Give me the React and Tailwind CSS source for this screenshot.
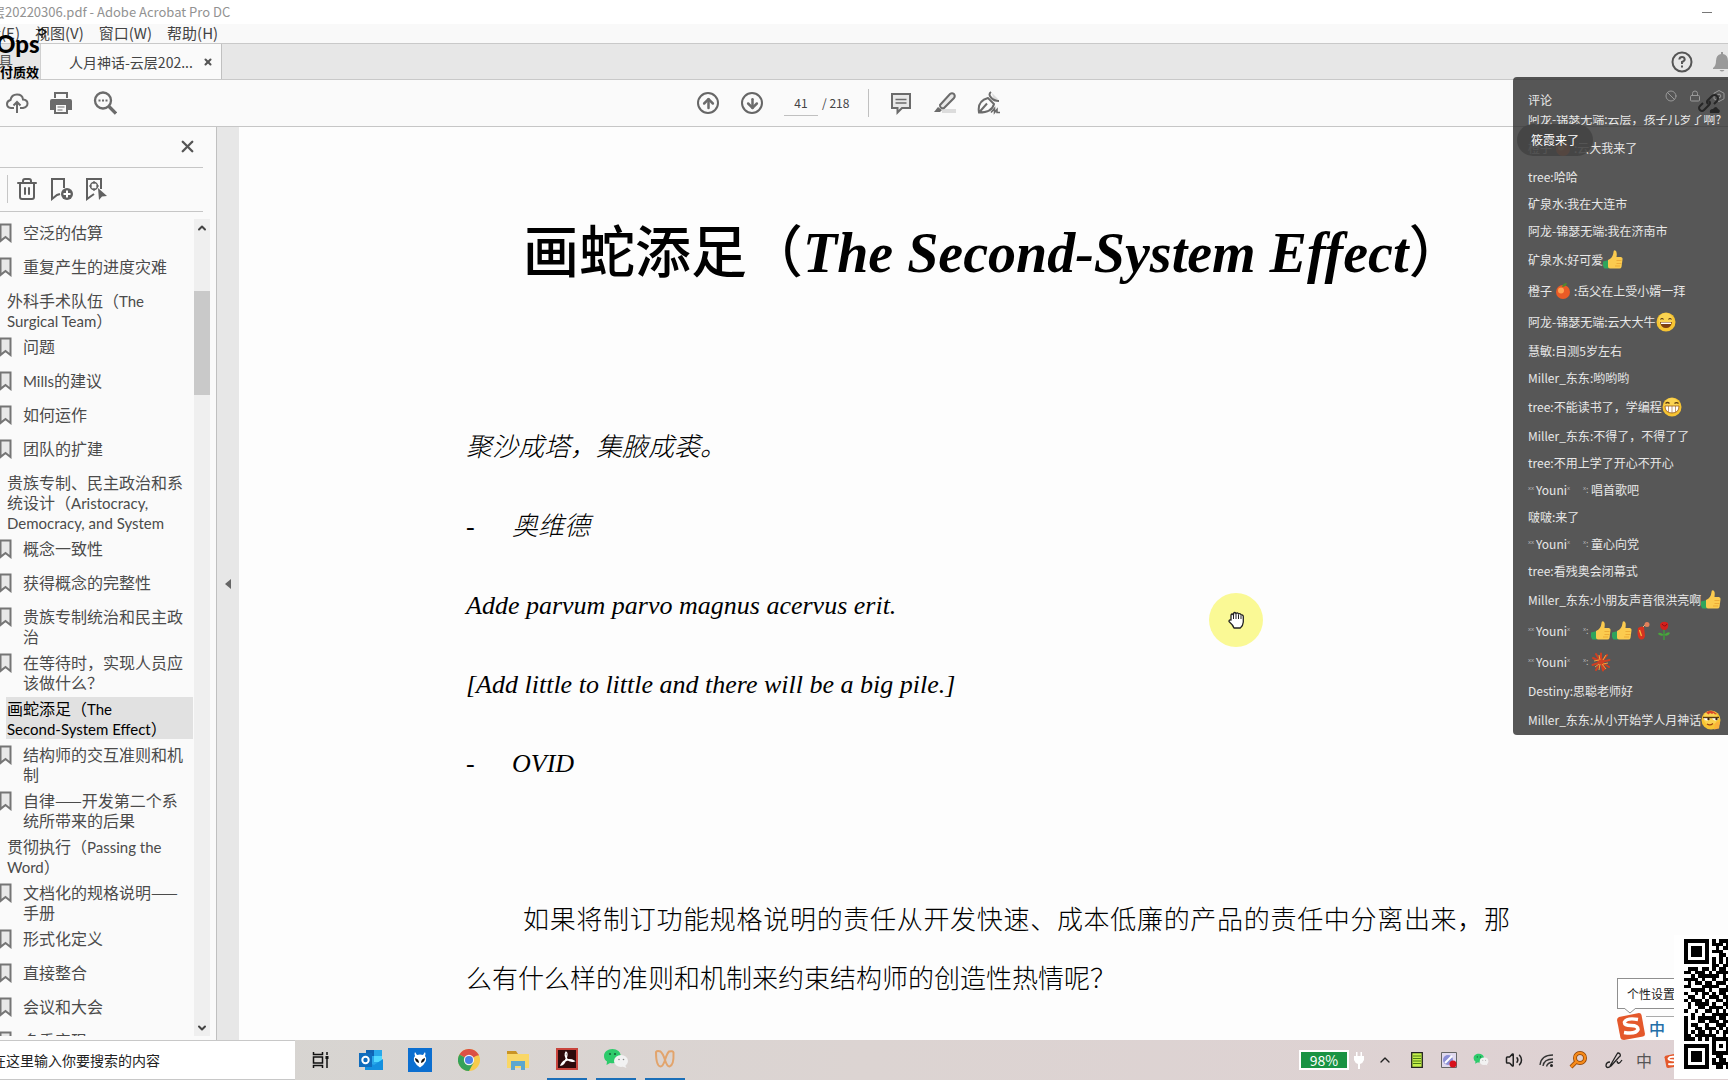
import { Trash2, X, ChevronUp, ChevronDown, ArrowUp, ArrowDown, Volume2, Lock, Ban } from 'lucide-react'

const bookmarks = [
  { level: 1, text: '空泛的估算' },
  { level: 1, text: '重复产生的进度灾难' },
  { level: 0, text: '外科手术队伍（The\nSurgical Team）' },
  { level: 1, text: '问题' },
  { level: 1, text: 'Mills的建议' },
  { level: 1, text: '如何运作' },
  { level: 1, text: '团队的扩建' },
  { level: 0, text: '贵族专制、民主政治和系\n统设计（Aristocracy,\nDemocracy, and System' },
  { level: 1, text: '概念一致性' },
  { level: 1, text: '获得概念的完整性' },
  { level: 1, text: '贵族专制统治和民主政\n治' },
  { level: 1, text: '在等待时，实现人员应\n该做什么？' },
  { level: 0, text: '画蛇添足（The\nSecond-System Effect）', active: true },
  { level: 1, text: '结构师的交互准则和机\n制' },
  { level: 1, text: '自律——开发第二个系\n统所带来的后果' },
  { level: 0, text: '贯彻执行（Passing the\nWord）' },
  { level: 1, text: '文档化的规格说明——\n手册' },
  { level: 1, text: '形式化定义' },
  { level: 1, text: '直接整合' },
  { level: 1, text: '会议和大会' },
  { level: 1, text: '多重实现' },
]

const comments = [
  { user: '阿龙-锦瑟无端', text: '云层，孩子几岁了啊?' },
  { user: '橙子', fruit: true, text: '云大我来了' },
  { user: 'tree', text: '哈哈' },
  { user: '矿泉水', text: '我在大连市' },
  { user: '阿龙-锦瑟无端', text: '我在济南市' },
  { user: '矿泉水', text: '好可爱', emoji: ['thumb'] },
  { user: '橙子', fruit: true, text: '岳父在上受小婿一拜' },
  { user: '阿龙-锦瑟无端', text: '云大大牛', emoji: ['smile'] },
  { user: '慧敏', text: '目测5岁左右' },
  { user: 'Miller_东东', text: '哟哟哟' },
  { user: 'tree', text: '不能读书了，学编程', emoji: ['grin'] },
  { user: 'Miller_东东', text: '不得了，不得了了' },
  { user: 'tree', text: '不用上学了开心不开心' },
  { youni: true, text: '唱首歌吧' },
  { user: '啵啵', text: '来了' },
  { youni: true, text: '童心向党' },
  { user: 'tree', text: '看残奥会闭幕式' },
  { user: 'Miller_东东', text: '小朋友声音很洪亮啊', emoji: ['thumb'] },
  { youni: true, text: '', emoji: ['thumb', 'thumb', 'cracker', 'rose'] },
  { youni: true, text: '', emoji: ['firework'] },
  { user: 'Destiny', text: '思聪老师好' },
  { user: 'Miller_东东', text: '从小开始学人月神话', emoji: ['cool'] },
]

const qrRows = [
  '1111111010111', '1000001011101', '1011101001011', '1011101011100', '1011101000110',
  '1000001010101', '1111111010101', '0000000011011', '0111011010110', '1101110101111',
  '0010111111010', '1111010010011', '0101101101110', '1100011111001', '0011110100111',
  '1001011010110', '0110010111011', '1011101001101', '0101111010011', '0100110111101',
  '1001001101010', '0010010011111', '1010111110110', '1000110111011', '1011001001110',
  '1001101110101', '1010110101011', '1101111110010', '1110101011111', '0000000010001',
  '1111111010101', '1000001010001', '1011101011111', '1011101001100', '1011101010110',
  '1000001011111', '1111111001101',
]

function Emoji({ name }) {
  const face = (
    <>
      <circle cx="10" cy="10" r="9.5" fill="#f7c432" />
      <circle cx="9.5" cy="8" r="7" fill="#fde06b" opacity=".55" />
    </>
  )
  return (
    <svg viewBox="0 0 20 20" className="mr-px h-5 w-5 shrink-0">
      {name === 'thumb' && (
        <>
          <path d="M0 11.500l6-1.500v8.500H1.500q-2.500-3-1.500-7z" fill="#2fa45c" />
          <path d="M5 10q5-2 5.500-8 0-2 1.500-1.800Q14.500 1 13.500 7H18q2 .5 1.500 2.500L18.500 17q-.5 1.500-2 1.500H7q-2 0-2-2z" fill="#fbcb4f" />
          <path d="M13.500 10.500h5M13.500 13.500h5M12 16h5" stroke="#e79f2c" strokeWidth=".7" />
        </>
      )}
      {name === 'smile' && (
        <>
          {face}
          <path d="M4.500 7.500q1.500-2 3 0M12.500 7.500q1.500-2 3 0" fill="none" stroke="#5b3a10" strokeWidth="1.200" />
          <path d="M4 10h12q-1 6-6 6t-6-6z" fill="#7c3f12" />
          <path d="M5 10.500h10v1.500H5z" fill="#fff" />
        </>
      )}
      {name === 'grin' && (
        <>
          {face}
          <path d="M3.500 6.500q2-2 4 0M12.500 6.500q2-2 4 0" fill="none" stroke="#5b3a10" strokeWidth="1.200" />
          <path d="M3 9h14q0 7-7 7T3 9z" fill="#fff" stroke="#9a5b15" strokeWidth=".8" />
          <path d="M6.500 9v6M10 9v7M13.500 9v6" stroke="#9a5b15" strokeWidth=".6" />
        </>
      )}
      {name === 'cool' && (
        <>
          {face}
          <path d="M5 2.500q5-4 11 1.500l-2 .5-1.500-1.500-1.500 1-2-1-1.500 1.500z" fill="#d9482b" />
          <path d="M2.500 7.500h6.500v1.500q-3 3-6 0zM11 7.500h6.500V9q-3 3-6 0z" fill="#fff" />
          <path d="M2 7.500h16" stroke="#5b3a10" strokeWidth="1.400" />
          <circle cx="7.500" cy="9" r="1.200" fill="#3b2408" />
          <circle cx="15.500" cy="9" r="1.200" fill="#3b2408" />
          <path d="M6 14q3 2 6-.5" fill="none" stroke="#a0430f" strokeWidth="1.200" />
          <path d="M14 13.500q3-2.500 5-1.500l-1 6.500-5 1z" fill="#fbb23a" />
        </>
      )}
      {name === 'cracker' && (
        <>
          <path d="M5 7q3-2.500 6-1l1 9q-1 4-4 3.500Q5 18 4.500 12z" fill="#d8321f" />
          <path d="M6.500 9l2 6" stroke="#f6b73c" strokeWidth="1.300" />
          <path d="M10 6l3-3" stroke="#eac27a" />
          <circle cx="14" cy="3.500" r="2.500" fill="#e2805a" />
        </>
      )}
      {name === 'rose' && (
        <>
          <path d="M10 8v11" stroke="#3c9a3b" strokeWidth="1.500" />
          <path d="M10 14q-5-4-6-1 3 3 6 1zM10 14q4-4 6-2-2 4-6 2z" fill="#49a63c" />
          <path d="M6 3q3-4 8-1 1 6-3 7-5 0-5-6z" fill="#d3201d" />
          <path d="M8 3q3 4 5 0" fill="none" stroke="#8f0d12" />
        </>
      )}
      {name === 'firework' && (
        <>
          <path
            d="M10 10V1.500M10 10l6-7M10 10l8.500-2M10 10l8 5M10 10l2 8.500M10 10l-5 8M10 10l-8.500 3M10 10L2 6M10 10L5 2M10 10l3.500 7"
            stroke="#cf3f22"
            strokeWidth="2"
            strokeLinecap="round"
          />
          <path d="M8 8L3 9M12 8l3-5M12 12l5-1M8 12l-4 3M9 8L8 3M11 12l4 5M9 12l-1 6" stroke="#f0a03a" strokeWidth="1" />
        </>
      )}
    </svg>
  )
}

function Fruit() {
  return (
    <svg viewBox="0 0 16 16" className="mx-[3px] h-4 w-4 shrink-0">
      <circle cx="8" cy="9" r="7" fill="#ea5b26" />
      <circle cx="6" cy="7.500" r="3" fill="#ffa251" />
      <path d="M7 4q1-4 5-4-1 4-5 4z" fill="#4d8b2c" />
    </svg>
  )
}

function WeChat({ className }) {
  return (
    <svg viewBox="0 0 26 22" className={className}>
      <path d="M9.500 1C4.500 1 1 4 1 8q0 3.500 3 5.500L3.500 17 7 15q7 1 10-3 2-6-1.500-9-2.500-2-6-2z" fill="#2dcb6b" />
      <ellipse cx="18" cy="13" rx="7" ry="6" fill="#f2f2f2" />
      <path d="M22 17l1.500 3-4-1.500z" fill="#f2f2f2" />
      <circle cx="7" cy="6" r="1.100" fill="#17643a" />
      <circle cx="12" cy="6" r="1.100" fill="#17643a" />
      <circle cx="16" cy="11.500" r=".8" fill="#888" />
      <circle cx="20.500" cy="11.500" r=".8" fill="#888" />
    </svg>
  )
}

function Sogou({ className }) {
  return (
    <svg viewBox="0 0 30 28" className={className}>
      <path d="M3 5L23 1q2 0 2.500 2L29 22q0 2-2 2.500L8 28q-3 0-3.500-2L1 8q0-2 2-3z" fill="#e4582b" />
      <path d="M22 7.500q-11-2-13.500 2.500-.5 3.500 6.500 3.500t7 4q-2 5-14 3" fill="none" stroke="#fff" strokeWidth="3.500" />
    </svg>
  )
}

function TopBars() {
  return (
    <header className="shrink-0">
      <div className="flex h-6 items-center justify-between overflow-hidden bg-white pr-4 text-[13px] text-[#929292]">
        <span className="-ml-2 whitespace-nowrap">层20220306.pdf - Adobe Acrobat Pro DC</span>
        <button aria-label="最小化" className="h-4 w-[10px]">
          <span className="block h-px bg-[#777]" />
        </button>
      </div>
      <nav className="flex h-[19px] items-center gap-[15px] overflow-hidden bg-[#f9f9f9] pb-px text-[15px] leading-[18px] text-[#444]">
        <button className="-ml-[14px] whitespace-nowrap">辑(E)</button>
        <button>视图(V)</button>
        <button>窗口(W)</button>
        <button>帮助(H)</button>
      </nav>
      <div className="flex h-[37px] border-y border-[#c9c9c9] bg-[#e7e7e7]">
        <button className="-ml-[2px] flex w-[43px] shrink-0 items-center overflow-hidden border-r border-[#d0d0d0] text-[15px] text-[#555]">具</button>
        <div className="flex w-[181px] items-center border-r border-[#c0c0c0] bg-[#fafafa] pl-7 text-sm text-[#444]">
          <span className="whitespace-nowrap">人月神话-云层202...</span>
          <button aria-label="关闭标签" className="ml-[10px]">
            <X className="h-[10px] w-[10px] text-[#555]" strokeWidth={5} />
          </button>
        </div>
        <div className="ml-auto -mr-1 flex items-center gap-[19px]">
          <button aria-label="帮助">
            <svg viewBox="0 0 22 22" className="h-[22px] w-[22px]" fill="none" stroke="#555" strokeWidth="2">
              <circle cx="11" cy="11" r="9.500" />
              <path d="M8.300 8.500q.3-2.500 2.700-2.500t2.700 2.300Q13.700 10 11 11v2M11 14.500v2" />
            </svg>
          </button>
          <button aria-label="通知">
            <svg viewBox="0 0 20 20" className="h-5 w-5" fill="#999">
              <path d="M9 0h2v2q5 1 5 7 0 5 3 7v1H1v-1q3-2 3-7 0-6 5-7zM7.500 18h5q-2.500 3-5 0z" />
            </svg>
          </button>
        </div>
      </div>
      <div className="grid h-[47px] grid-cols-[1fr_auto_1fr] items-center border-b border-[#c6c6c6] bg-[#fafafa] pr-[30px] text-[#6b6b6b]">
        <div className="flex items-center gap-5 pl-[5px]">
          <button aria-label="上传">
            <svg viewBox="0 0 24 24" className="h-6 w-6" fill="none" stroke="currentColor" strokeWidth="2">
              <path d="M9 17H6q-4-.5-4-4 0-3 3.500-4Q6.500 3.500 12 3.500T18 8.500q4.500.5 4.500 4T18 17h-3M12 22V11M8.500 14.500L12 11l3.500 3.500" />
            </svg>
          </button>
          <button aria-label="打印">
            <svg viewBox="0 0 24 24" className="h-6 w-6" fill="currentColor">
              <path d="M5 1h14v6H5zM3 8h18q2 0 2 2v9h-4v-5H5v5H1v-9q0-2 2-2z" />
              <path d="M7 3h10v5H7z" fill="#fafafa" />
              <path d="M6 13h12v9H6z" fill="#fafafa" stroke="currentColor" strokeWidth="2" />
              <path d="M8.500 16h7M8.500 19h5" stroke="currentColor" strokeWidth="1.200" />
            </svg>
          </button>
          <button aria-label="查找">
            <svg viewBox="0 0 24 24" className="h-6 w-6" fill="none" stroke="currentColor" strokeWidth="2.300">
              <circle cx="10" cy="9.500" r="8" />
              <path d="M16 15.500l7 7" strokeWidth="3.300" />
              <path d="M5.500 9.500h2M9 9.500h2M12.500 9.500h2" strokeWidth="2" />
            </svg>
          </button>
        </div>
        <div className="flex items-center">
          <button aria-label="上一页" className="flex h-[22px] w-[22px] items-center justify-center rounded-full border-2 border-[#666]">
            <ArrowUp className="h-[15px] w-[15px]" strokeWidth={4} />
          </button>
          <button aria-label="下一页" className="ml-[22px] flex h-[22px] w-[22px] items-center justify-center rounded-full border-2 border-[#666]">
            <ArrowDown className="h-[15px] w-[15px]" strokeWidth={4} />
          </button>
          <input
            aria-label="页码"
            defaultValue="41"
            className="ml-[21px] h-[26px] w-[34px] border-b border-[#c0c0c0] bg-transparent text-center text-xs text-[#444] outline-none"
          />
          <span className="ml-1 w-[46px] text-xs text-[#444]">/ 218</span>
          <span className="mr-5 h-7 w-px bg-[#c0c0c0]" />
          <button aria-label="添加附注">
            <svg viewBox="0 0 24 24" className="h-6 w-6" fill="#e8e8e8" stroke="currentColor" strokeWidth="2">
              <path d="M3 3h18v14h-8l-4.500 4.500V17H3z" />
              <path d="M6.500 8.500h11M6.500 12h11" strokeWidth="1.300" />
            </svg>
          </button>
          <button aria-label="高亮文本" className="ml-5">
            <svg viewBox="0 0 24 24" className="h-6 w-6" fill="#e8e8e8" stroke="currentColor" strokeWidth="2">
              <path d="M9 18h14v4H9z" fill="#dcdcdc" stroke="none" />
              <path d="M7 14L17 3q2-1.500 4 0 1.500 2 0 4L11 17q-4 1-4-3z" />
              <path d="M5 16l4 3-2 2H1z" fill="currentColor" stroke="none" />
            </svg>
          </button>
          <button aria-label="签名" className="ml-5">
            <svg viewBox="0 0 24 24" className="h-6 w-6" fill="none" stroke="currentColor" strokeWidth="2">
              <path d="M15 2l6 6-4 3z" fill="#dcdcdc" stroke="none" />
              <path d="M2 21.500Q0 10 11 7l6 6q-2 8.500-15 8.500zM2 21.500l8-9M14 1q-3 2 0 5.500T22 10" />
              <path d="M14 21.500l3.500-4v4l2.500-3v3h3" strokeWidth="1.600" />
            </svg>
          </button>
        </div>
        <span />
      </div>
    </header>
  )
}

// latin runs use a narrower face than the chinese around them
function MixedText({ text }) {
  return text.split(/([A-Za-z][A-Za-z ,-]*)/).map((part, i) =>
    i % 2 ? (
      <span key={i} className="font-['Lato',sans-serif] text-[15px] leading-none">{part}</span>
    ) : (
      part
    )
  )
}

function Sidebar() {
  return (
    <aside className="flex w-[217px] shrink-0 flex-col border-r border-[#c0c0c0] bg-[#fafafa] pb-1">
      <div className="mr-[13px] flex h-[41px] shrink-0 items-center justify-end border-b border-[#c6c6c6] pr-[6px] pb-[2px]">
        <button aria-label="关闭面板">
          <X className="h-[19px] w-[19px] text-[#555]" strokeWidth={3} />
        </button>
      </div>
      <div className="mr-[13px] flex h-11 shrink-0 items-center border-b border-[#c6c6c6] pb-px pl-[7px] text-[#606060]">
        <span className="h-7 w-px bg-[#c6c6c6]" />
        <button aria-label="删除书签" className="ml-[7px]">
          <Trash2 className="h-6 w-6" strokeWidth={2} />
        </button>
        <button aria-label="新建书签" className="ml-[11px]">
          <svg viewBox="0 0 24 24" className="h-6 w-6" fill="none" stroke="currentColor" strokeWidth="2">
            <path d="M10 17l-3 1-5 4V2h12v9" />
            <circle cx="17" cy="17" r="6" fill="currentColor" stroke="none" />
            <path d="M17 13.500v7M13.500 17h7" stroke="#fff" />
          </svg>
        </button>
        <button aria-label="查找书签" className="ml-[11px]">
          <svg viewBox="0 0 24 24" className="h-6 w-6" fill="none" stroke="currentColor" strokeWidth="2">
            <path d="M9 17l-7 5V2h14v10" />
            <circle cx="9" cy="9" r="3.500" strokeWidth="1.500" />
            <path d="M9 4v3M9 11v3M4 9h3M11 9h3" strokeWidth="1.200" />
            <path d="M13 11l9 8-5 .5-3 3.500z" fill="currentColor" stroke="none" />
          </svg>
        </button>
      </div>
      <div className="mt-[7px] flex min-h-0 flex-1">
        <ul className="min-w-0 flex-1 overflow-hidden text-base leading-5 text-[#4b4b4b]">
          {bookmarks.map((b) => (
            <li key={b.text} className="flex min-h-[34px] items-start pt-[2px] pb-[2px]">
              {b.level === 1 && (
                <svg viewBox="0 0 13 20" className="mt-[2px] -ml-px mr-[5px] h-5 w-[13px] shrink-0">
                  <path d="M1.500 1.500h10v16.500l-5-4-5 4z" fill="#e8e8e8" stroke="#757575" strokeWidth="2" />
                </svg>
              )}
              <button
                className={
                  b.active
                    ? 'ml-[6px] mr-px flex-1 bg-[#e1e1e1] py-px pl-px text-left whitespace-pre text-black'
                    : b.level === 1
                      ? 'ml-[6px] flex-1 py-px text-left whitespace-pre'
                      : 'ml-[7px] flex-1 py-px text-left whitespace-pre'
                }
              >
                <MixedText text={b.text} />
              </button>
            </li>
          ))}
        </ul>
        <div className="mr-[6px] flex w-4 shrink-0 flex-col items-center bg-[#efefef] text-[#444]">
          <ChevronUp className="mt-px h-4 w-3" strokeWidth={4} />
          <div className="mt-[55px] h-[104px] w-full bg-[#c9c9c9]" />
          <ChevronDown className="mt-auto h-4 w-3" strokeWidth={4} />
        </div>
      </div>
    </aside>
  )
}

function Page() {
  return (
    <main className="min-w-0 flex-1 overflow-hidden bg-[#fdfdfd] pt-[86px] pl-[227px] font-['Liberation_Serif','Noto_Sans_CJK_SC',serif] text-black">
      <h1 className="ml-[57px] text-[56px] leading-[80px] font-medium whitespace-nowrap">
        画蛇添足（<em className="font-bold">The Second-System Effect</em>）
      </h1>
      <div className="mt-[115px] text-[26px] leading-[79px] whitespace-nowrap italic">
        <p className="font-light">聚沙成塔，集腋成裘。</p>
        <p className="flex font-light"><span className="w-[46px] not-italic">-</span>奥维德</p>
        <p>Adde parvum parvo magnus acervus erit.</p>
        <p>[Add little to little and there will be a big pile.]</p>
        <p className="flex"><span className="w-[46px] not-italic">-</span>OVID</p>
      </div>
      <p className="mt-[88px] max-w-[1044px] indent-[57px] text-[26px] leading-[59px] font-light text-justify">
        如果将制订功能规格说明的责任从开发快速、成本低廉的产品的责任中分离出来，那么有什么样的准则和机制来约束结构师的创造性热情呢？
      </p>
    </main>
  )
}

function YouniName() {
  return (
    <span className="flex items-center">
      <span className="w-2 text-[9px] text-[#bbb]">ˣˣ</span>
      <span>Youni</span>
      <span className="w-4 text-[9px] text-[#bbb]">ˣ</span>
      <span className="w-2 text-[9px] text-[#bbb]">ˣ:</span>
    </span>
  )
}

function ChatPanel() {
  return (
    <section className="absolute top-[77px] right-0 w-[215px] overflow-hidden rounded-l bg-[#2d2d2d]/80 text-xs text-[#e8e8e8]">
      <div className="flex h-[38px] items-center pt-2 pl-[15px]">
        <h2>评论</h2>
        <div className="ml-auto flex items-center gap-3 pr-[3px] pb-2 text-[#999]">
          <Ban className="h-3 w-3" />
          <Lock className="h-3 w-3" />
          <svg viewBox="0 0 12 12" className="h-3 w-3" fill="none" stroke="currentColor">
            <path d="M6 .5l5 2.700v5.600l-5 2.700-5-2.700V3.200z" />
            <circle cx="6" cy="6" r="1.800" />
          </svg>
        </div>
      </div>
      <div className="overflow-hidden">
        <ul className="-mt-[10px]">
          {comments.map((c, i) => (
            <li
              key={i}
              className={c.emoji || c.fruit ? 'flex h-[31px] items-center pl-[15px] whitespace-pre' : 'flex h-[27px] items-center pl-[15px] whitespace-pre'}
            >
              {c.youni ? <YouniName /> : <span>{c.user}{!c.fruit && ':'}</span>}
              {c.fruit && <><Fruit /><span>:</span></>}
              <span>{c.text}</span>
              {c.emoji && c.emoji.map((e, n) => <Emoji key={n} name={e} />)}
            </li>
          ))}
        </ul>
      </div>
      <div className="absolute top-[47px] left-1 flex h-8 w-[76px] items-center rounded-full bg-[#444]/90 pl-[14px] text-white">
        筱霞来了
      </div>
      <svg viewBox="0 0 24 22" className="absolute top-[15px] right-[7px] h-[22px] w-6" fill="none" stroke="#262626" strokeWidth="2">
        <path d="M11 12q-2-2 0-4l4-4q3-2 5 0t0 5l-3 3M12 9q2 2 0 4l-5 5q-2 2-4 0t0-4l3-3" />
        <path d="M13 21q-1-4 3-4 3-4 5 0 3 1 1 4z" fill="#262626" stroke="none" />
      </svg>
    </section>
  )
}

function Taskbar() {
  return (
    <footer className="flex h-10 shrink-0 bg-linear-to-r from-[#d5d5d1] via-[#dcd4d2] to-[#dfd1d3]">
      <label className="w-[295px] shrink-0 overflow-hidden border-y border-[#c8c8c8] bg-white">
        <input
          aria-label="搜索"
          placeholder="在这里输入你要搜索的内容"
          className="-ml-2 h-full w-full text-sm outline-none placeholder:text-[#222]"
        />
      </label>
      <div className="flex">
        <button aria-label="任务视图" className="flex w-[51px] items-center justify-center">
          <svg viewBox="0 0 18 18" className="h-[18px] w-[18px]" fill="none" stroke="#111" strokeWidth="1.500">
            <path d="M1.500 1v2.500h9V1M1.500 17v-2.500h9V17M1.500 6h9v6h-9zM15 1v3M15 8v9" />
            <path d="M13.500 5h3v3h-3z" fill="#111" stroke="none" />
          </svg>
        </button>
        <button aria-label="Outlook" className="flex w-[49px] items-center justify-center">
          <svg viewBox="0 0 24 22" className="h-[22px] w-6">
            <path d="M7 1h16v18H7z" fill="#28a8ea" />
            <path d="M7 1h8v6H7z" fill="#0f64b4" />
            <path d="M15 7h8v6h-8z" fill="#50d9ff" />
            <path d="M6 21V12l9 4 9-6v11z" fill="#1490df" />
            <path d="M0 4h13v14H0z" fill="#0f6cbd" />
            <circle cx="6.500" cy="11" r="3.200" fill="none" stroke="#fff" strokeWidth="2" />
          </svg>
        </button>
        <button aria-label="foobar2000" className="flex w-[49px] items-center justify-center">
          <svg viewBox="0 0 24 24" className="h-6 w-6">
            <path d="M0 0h24v24H0z" fill="#0c6fd0" />
            <path d="M7 4l2 3q3-1 6 0l2-3q1 2 0 4 2 2 1 5-2 4-6 6.500Q8 17 6 13q-1-3 1-5-1-2 0-4z" fill="#fff" />
            <path d="M7 10q4 1 4 5-4-1-4-5zM17 10q-4 1-4 5 4-1 4-5z" fill="#111" />
          </svg>
        </button>
        <button aria-label="Chrome" className="flex w-[49px] items-center justify-center">
          <svg viewBox="0 0 24 24" className="h-[22px] w-[22px]">
            <circle cx="12" cy="12" r="12" fill="#f7cb4c" />
            <path d="M12 12L1.600 6A12 12 0 0 1 22.400 6z" fill="#dc5145" />
            <path d="M12 12L1.600 6A12 12 0 0 0 12 24l5-9z" fill="#34a25a" />
            <path d="M12 6.500h10.700" stroke="#dc5145" strokeWidth="1" />
            <circle cx="12" cy="12" r="5.600" fill="#f4f4f4" />
            <circle cx="12" cy="12" r="4.400" fill="#4a80e8" />
          </svg>
        </button>
        <button aria-label="文件资源管理器" className="flex w-[49px] items-center justify-center">
          <svg viewBox="0 0 24 22" className="h-[22px] w-6">
            <path d="M1 2h9l2 3H1z" fill="#c99424" />
            <path d="M1 5h22v14H1z" fill="#f9d767" />
            <path d="M5 21v-9h14v9h-4v-4H9v4z" fill="#5ca7cf" />
          </svg>
        </button>
        <button aria-label="Acrobat" className="flex w-[49px] flex-col items-center pt-2">
          <svg viewBox="0 0 22 22" className="h-[22px] w-[22px]">
            <path d="M1 1h20v20H1z" fill="#2d0a0b" stroke="#c8443c" strokeWidth="2" />
            <path d="M5 17q2-4 6-5 4-1 7 1-4 1-7-2-3-4-1-7 2 1 0 7-2 6-5 6z" fill="none" stroke="#fff" strokeWidth="1.300" />
          </svg>
          <span className="mt-auto h-[2px] w-10 bg-[#1b6fb8]" />
        </button>
        <button aria-label="微信" className="flex w-[49px] flex-col items-center pt-2">
          <WeChat className="h-[22px] w-[26px]" />
          <span className="mt-auto h-[2px] w-10 bg-[#1b6fb8]" />
        </button>
        <button aria-label="文稿" className="flex w-[49px] flex-col items-center pt-2">
          <svg viewBox="0 0 22 22" className="h-[22px] w-[22px]" fill="none" stroke="#e2a46c" strokeWidth="2">
            <path d="M2 4q0 14 4.500 14.500Q9 18.500 11 12t4-8.500q4-1 4.500 1 .5 13-4 14-2.500 0-4.500-6.500T6.500 3.500Q3 2.500 2 4z" />
          </svg>
          <span className="mt-auto h-[2px] w-10 bg-[#1b6fb8]" />
        </button>
      </div>
      <div className="mr-[54px] ml-auto flex items-center overflow-hidden text-[#222]">
        <div className="flex h-5 w-[50px] items-center justify-center border-2 border-white bg-[#199343] text-sm text-white">98%</div>
        <svg viewBox="0 0 12 20" className="ml-1 h-5 w-3" fill="#fff">
          <path d="M3 2h1.500v4h3V2H9v4h2v4q-1 3-4 4v5H5v-5q-3-1-4-4V6h2z" />
        </svg>
        <ChevronUp className="ml-3 h-4 w-4" strokeWidth={2} />
        <svg viewBox="0 0 12 16" className="ml-[18px] h-4 w-3">
          <path d="M.7.7h10.600v14.600H.7z" fill="#c5f04a" stroke="#222" strokeWidth="1.300" />
          <path d="M2 4h8M2 6.500h8M2 9h8M2 11.500h8" stroke="#4a7d14" />
        </svg>
        <svg viewBox="0 0 16 16" className="ml-[18px] h-4 w-4">
          <path d="M.5.5h15v15H.5z" fill="#e0d9ee" stroke="#666" />
          <circle cx="7" cy="8" r="5" fill="#8b8ed6" />
          <path d="M4 11l7-7" stroke="#fff" strokeWidth="2" />
          <circle cx="12" cy="12" r="3.500" fill="#d8111c" />
        </svg>
        <WeChat className="ml-4 h-[14px] w-4" />
        <Volume2 className="ml-4 h-[18px] w-[18px]" strokeWidth={2} />
        <svg viewBox="0 0 16 16" className="ml-4 h-4 w-4" fill="none" stroke="#333" strokeWidth="1.300">
          <path d="M1 13Q2 3 14 3M4 14q1-7 10-7M7.500 14.500q1-4 6.500-4.500" />
          <circle cx="12.500" cy="13.500" r="1.500" fill="#222" stroke="none" />
        </svg>
        <svg viewBox="0 0 18 18" className="ml-[14px] h-[18px] w-[18px]" fill="none">
          <path d="M8 10l-6 6" stroke="#8b4207" strokeWidth="4" />
          <circle cx="11" cy="7" r="5" stroke="#8b4207" strokeWidth="4" />
          <path d="M8 10l-6 6" stroke="#f68a1a" strokeWidth="2.500" />
          <circle cx="11" cy="7" r="5" stroke="#f68a1a" strokeWidth="2.500" />
        </svg>
        <svg viewBox="0 0 18 18" className="ml-[18px] h-[18px] w-[18px]" fill="none" stroke="#222" strokeWidth="1.300">
          <path d="M5 15L12 3q1-2 3 0 1 2-1 3L6 15q-4 3-5 0 0-4 4-4M12 10q1 5 5-1" />
        </svg>
        <span className="ml-[13px] text-base text-[#555]">中</span>
        <span className="ml-3 w-[10px] overflow-hidden"><Sogou className="h-[15px] w-4" /></span>
      </div>
    </footer>
  )
}

export default function App() {
  return (
    <div className="relative flex h-screen flex-col overflow-hidden bg-white font-['Noto_Sans_CJK_SC','Noto_Sans',sans-serif]">
      <TopBars />
      <div className="flex min-h-0 flex-1">
        <Sidebar />
        <button aria-label="折叠面板" className="flex w-[22px] shrink-0 items-center justify-center bg-[#e7e7e7]">
          <svg viewBox="0 0 6 10" className="h-[10px] w-[6px]"><path d="M6 0v10L0 5z" fill="#666" /></svg>
        </button>
        <Page />
      </div>
      <Taskbar />

      {/* watermark logo */}
      <div className="pointer-events-none absolute top-[31px] left-0 w-[46px] overflow-hidden font-bold text-black">
        <div className="-ml-1 font-['Lato','Noto_Sans_CJK_SC',sans-serif] text-[24px] leading-[26px] font-black">Ops</div>
        <div className="mt-[7px] text-[13px] leading-4 whitespace-nowrap">付质效</div>
      </div>
      <svg viewBox="0 0 10 12" className="pointer-events-none absolute top-[27px] left-[37px] h-3 w-[10px]" fill="none" stroke="#111" strokeWidth="1.500">
        <path d="M1 4l4-2 4 3-4 3-3-1M5 8v3" />
      </svg>

      {/* cursor spotlight */}
      <div className="pointer-events-none absolute top-[593px] left-[1209px] flex h-[54px] w-[54px] items-center justify-center rounded-full bg-[#faf995]">
        <svg viewBox="0 0 18 18" className="h-[18px] w-[18px]" fill="#fff" stroke="#222" strokeWidth="1.300" strokeLinejoin="round">
          <path d="M4 9V4q1-2 2.500 0V2.500q1-2 2.500 0Q10.500 1 11.500 3q2-1 2.500 1 2-.5 2.300 1.500V11q-.3 4-3 6H7q-1-3-5-6.500Q2 8.500 4 9z" />
          <path d="M6.500 4v4M9 3v5M11.500 3.500V8M14 5v3" strokeWidth="1" />
        </svg>
      </div>

      <ChatPanel />

      {/* input method bar */}
      <div className="absolute right-[54px] bottom-10 w-[58px] overflow-hidden">
        <div className="ml-px h-[31px] border border-r-0 border-[#8f8f8f] bg-white pl-[9px] text-xs leading-[29px] whitespace-nowrap text-[#222]">
          个性设置
        </div>
        <div className="flex h-[31px] items-end">
          <Sogou className="h-7 w-[30px] shrink-0" />
          <span className="h-6 flex-1 border-t border-[#aaa] bg-white pl-[3px] text-base leading-[22px] font-medium text-[#236fa8]">中</span>
        </div>
        <svg viewBox="0 0 12 6" className="absolute top-[30px] left-2 h-[6px] w-3">
          <path d="M0 0l6 5 6-5" fill="#fff" stroke="#8f8f8f" />
        </svg>
      </div>

      <div className="absolute right-0 bottom-px w-[54px] overflow-hidden bg-white pt-1 pb-[10px] pl-[10px]">
        <svg viewBox="0 0 12.500 37" className="h-[130px] w-11" preserveAspectRatio="none" shapeRendering="crispEdges">
          {qrRows.map((row, y) =>
            row.split('').map((bit, x) => bit === '1' && <rect key={`${x}-${y}`} x={x} y={y} width="1" height="1" />)
          )}
        </svg>
      </div>
    </div>
  )
}
